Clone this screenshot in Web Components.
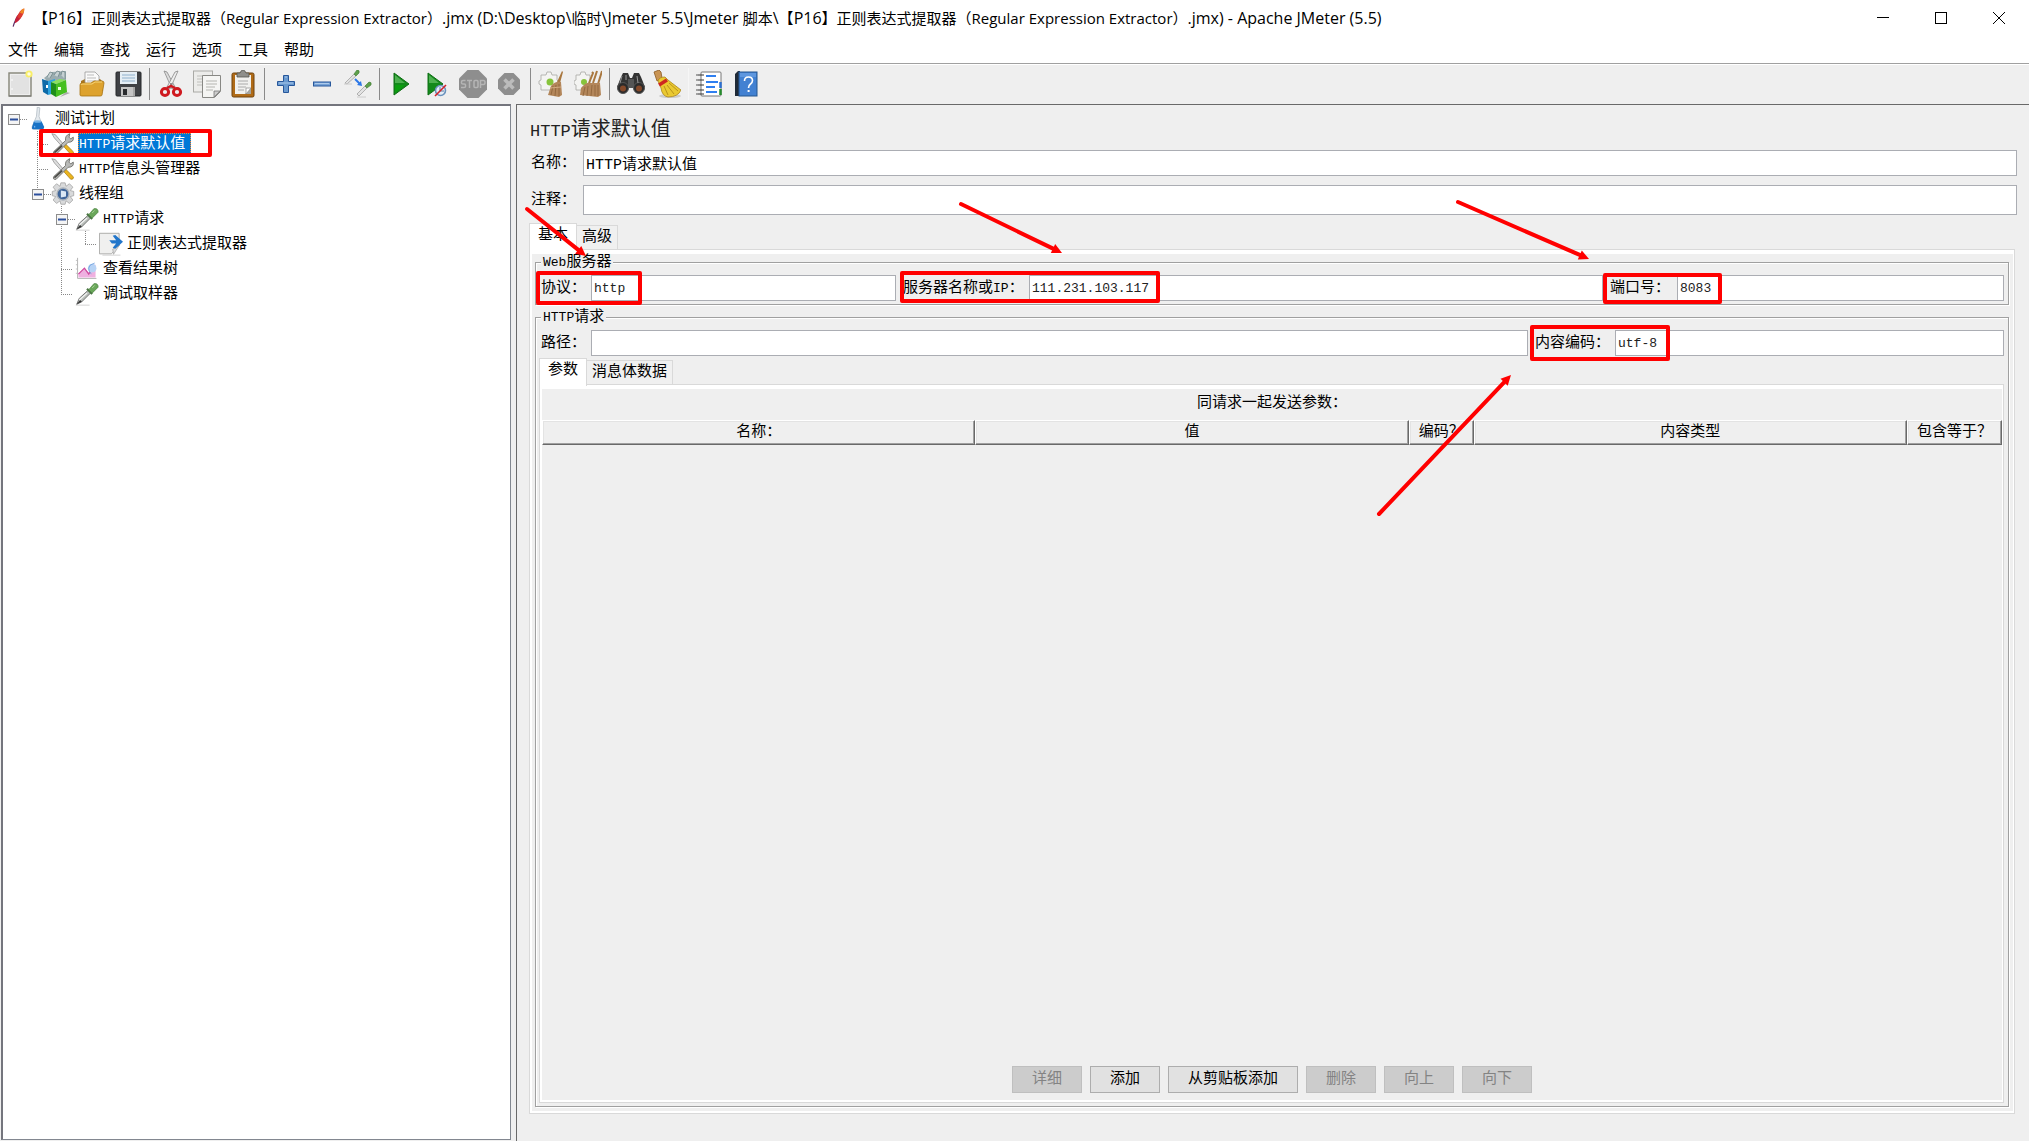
<!DOCTYPE html>
<html lang="zh-CN">
<head>
<meta charset="utf-8">
<title>Apache JMeter (5.5)</title>
<style>
  html, body { height: 100%; margin: 0; }
  body { background: #efefef; overflow: hidden; }
</style>
</head>
<body>
<jm-app></jm-app>
<script>
const ICONS = {
  feather: `<path d="M6 24C8 17 10 13 13 10" stroke="#5b2a63" stroke-width="1.4" fill="none"/><path d="M8 20C8 14 11 9 16 7C18 10 14 18 8 20Z" fill="#c5203a"/><path d="M11 13C12 8 15 4 19 3C19 7 18 11 14 15Z" fill="#dc3a30"/><path d="M14 8C15 5 17 3 19 3C19 5 19 7 17 9Z" fill="#f08a24"/>`,
  fresh: `<rect x="3" y="3" width="22" height="23" fill="#eee" stroke="#858578" stroke-width="1.4"/><rect x="5" y="5" width="18" height="19" fill="#e2e2e2"/><path d="M6 9v2M6 18v2" stroke="#fff"/><path d="M3 26h22" stroke="#777"/><circle cx="23" cy="4" r="3.6" fill="#f8ee68"/><circle cx="23" cy="4" r="1.7" fill="#fffde0"/>`,
  templates: `<path d="M2 8l8-6 14-1v12l-10 8z" fill="#9aacb0"/><path d="M5 7l3-5 3 1-3 5M12 5l3-4 3 1-2 5M19 5l1-4 3 1v7" fill="#c5d0d2" stroke="#6e8588" stroke-width=".8"/><path d="M0 9l6 2v14l-5-3z" fill="#0d6aa8"/><path d="M6 11l7-2v14l-7 2z" fill="#2ea3df"/><path d="M24 22l4 1-10 4z" fill="#aaa"/><path d="M9 12l5 2v13l-5-3z" fill="#1f8d1b"/><path d="M14 14l10-4 1 12-11 5z" fill="#46c020"/><path d="M14 14l10-4-6-1-9 3z" fill="#8be05e"/><rect x="4" y="15" width="2" height="3" fill="#fff"/><rect x="16" y="17" width="3" height="3" fill="#e9ffe0"/>`,
  open: `<path d="M3 11l4-2h15l3 3v9H3z" fill="#a8761e"/><path d="M7 2h10l4 4v9H7z" fill="#fafafa" stroke="#9a9a9a" stroke-width=".8"/><path d="M9 5h7M9 8h9M9 11h9" stroke="#bbb"/><path d="M2 15q0-2 2-2h9l3-2h8q2 0 2 2l-2 12q0 1-2 1H4q-2 0-2-1z" fill="#dda22e" stroke="#a87413" stroke-width=".8"/><path d="M3 15q0-1 2-1h9l3-2h7" stroke="#f8d578" fill="none"/>`,
  save: `<rect x="2" y="2" width="25" height="24" rx="1" fill="#3f4145"/><rect x="2" y="2" width="25" height="24" rx="1" fill="none" stroke="#26282b"/><rect x="6" y="2" width="17" height="12" fill="#e5eef5"/><path d="M8 5h13M8 8h13M8 11h13" stroke="#8fb0cc"/><rect x="7" y="17" width="14" height="9" fill="#c4c4c4"/><rect x="9" y="19" width="4" height="6" fill="#292b2e"/><path d="M20 17v9" stroke="#888"/>`,
  cut: `<path d="M7 1l3 1 8 15-3 2z" fill="#ddd" stroke="#888" stroke-width=".8"/><path d="M21 1l-3 1-8 15 3 2z" fill="#eee" stroke="#888" stroke-width=".8"/><circle cx="14" cy="14" r="1" fill="#777"/><ellipse cx="8" cy="22" rx="3.6" ry="3.6" fill="none" stroke="#cf1a20" stroke-width="3"/><ellipse cx="20" cy="22" rx="3.6" ry="3.6" fill="none" stroke="#cf1a20" stroke-width="3"/><path d="M10 18l4-2 4 2" stroke="#cf1a20" stroke-width="2.5" fill="none"/>`,
  copy: `<rect x="0.5" y="1" width="19" height="21" fill="#ececea" stroke="#aaaaa6"/><path d="M4 6h12M4 9h5M4 12h5M4 15h5" stroke="#c0c0bc"/><path d="M9.500 5.500h18v16l-6 6h-12z" fill="#f5f5f3" stroke="#888884"/><path d="M13 11h11M13 14h11M13 17h9M13 20h7" stroke="#b5b5b0"/><path d="M27 21l-6 6v-6z" fill="#ccc" stroke="#777" stroke-width=".8"/>`,
  paste: `<rect x="3" y="3" width="22" height="24" rx="1.500" fill="#b06b17" stroke="#6f430e"/><rect x="6" y="5" width="16" height="19" fill="#f1f1ef"/><path d="M9 11h10M9 14h10M9 17h8M9 20h6" stroke="#aaa"/><path d="M22 18l-6 6h6z" fill="#a5a5a0"/><path d="M22 18h-5v6z" fill="#fff" stroke="#888" stroke-width=".7"/><path d="M8 3h3q1-3 3-3t3 3h3v4H8z" fill="#8f8f8b" stroke="#55554f" stroke-width=".8"/>`,
  plus: `<path d="M11.500 5.500h5v6h6v4h-6v7h-5v-7h-6v-4h6z" fill="#6a9ad0" stroke="#27579b"/><path d="M13 7h2M7 13h14" stroke="#a9c8ea"/>`,
  minus: `<rect x="5.500" y="12" width="17" height="4" fill="#78a4d8" stroke="#27579b"/><path d="M7 13.500h14" stroke="#aecbec"/>`,
  toggle: `<path d="M1 13l9-9 2 2-9 8z" fill="#e3e3e3" stroke="#999" stroke-width=".7"/><path d="M10 4l3-4q3 0 2 3l-3 3z" fill="#5ea04c" stroke="#3d7a30" stroke-width=".6"/><path d="M13 24l8-8 2 2-8 8z" fill="#e3e3e3" stroke="#999" stroke-width=".7"/><path d="M21 16l4-4q3 0 2 3l-4 3z" fill="#5ea04c" stroke="#3d7a30" stroke-width=".6"/><path d="M11 9l5 5" stroke="#2d78e8" stroke-width="2"/><path d="M18 16l-5-1 4-4z" fill="#2d78e8"/><path d="M0 14h8M13 27h9" stroke="#ccc"/>`,
  start: `<path d="M7 3l15 11L7 25z" fill="#138a1b" stroke="#0f6e14"/><path d="M8 5l10 8H8z" fill="#4eb151"/><path d="M8 15h10l-10 8z" fill="#0aa00e"/>`,
  startno: `<path d="M5 3l15 11L5 25z" fill="#138a1b" stroke="#0f6e14"/><path d="M6 5l10 8H6z" fill="#4eb151"/><circle cx="17.500" cy="20.500" r="5" fill="#e4edf6" stroke="#6a92bd" stroke-width="1.600"/><path d="M17 17v4h4" stroke="#5b7da1" fill="none"/><path d="M12 26l11-11" stroke="#d3232a" stroke-width="1.600"/>`,
  stop: `<path d="M8.500 0h11L28 8.500v11L19.500 28h-11L0 19.500v-11z" fill="#8e8e8e"/><path d="M6.500 10.500H4q-1.500 0-1.500 1.500v1q0 1 1.500 1h1.500q1 0 1 1v1.500q0 1-1.500 1H2M8 10.500h5M10.500 10.500v7.500M15 11.500q0-1 1-1h2q1 0 1 1v5q0 1-1 1h-2q-1 0-1-1zM21.500 18v-7.500h3q1.500 0 1.500 2t-1.500 2h-3" stroke="#b5b5b5" fill="none" stroke-width="1.500"/>`,
  shutdown: `<path d="M9.500 3h9L25 9.500v9L18.500 25h-9L3 18.500v-9z" fill="#8e8e8e"/><path d="M9.500 9.500l9 9M18.500 9.500l-9 9" stroke="#bcbcbc" stroke-width="3.500"/>`,
  clear: `<path d="M3 5h5l1-3h4l1 3h5v5l2 2-2 3v5H3v-5l-2-1v-3l2-1z" fill="#f4f4f2" stroke="#a8a8a4" stroke-width=".8"/><circle cx="12" cy="12" r="3.500" fill="#87c43b"/><path d="M24 1l1 1-3 11-3-1z" fill="#a9773f"/><path d="M13 16q4-5 10-4l1 13-3 2-11-2z" fill="#b3865a"/><path d="M15 16l-2 9M18 15l-1 11M21 14v12" stroke="#94693f"/><path d="M12 18l11-1" stroke="#d1aa80"/>`,
  clearall: `<path d="M2 5h4l1-3h4l1 3h4v15H2v-5l-2-1v-3l2-1z" fill="#f4f4f2" stroke="#a8a8a4" stroke-width=".8"/><circle cx="10" cy="12" r="3" fill="#87c43b"/><path d="M18 2l1 1-4 10M23 1l-4 12M28 1l-4 13" stroke="#a9773f" stroke-width="2" fill="none"/><path d="M7 18q5-6 9-5h10l1 12-3 2-9-1-9-1z" fill="#b3865a"/><path d="M11 17l-2 9M14 16l-1 10M18 15l-1 11M21 15v11M24 15v11" stroke="#94693f"/>`,
  search: `<path d="M4 7l2-4h5l2 5 2 0 2-5h5l2 4 4 10H0z" fill="#343434"/><circle cx="6" cy="18" r="5.500" fill="#2b2b2b" stroke="#555"/><circle cx="22" cy="18" r="5.500" fill="#2b2b2b" stroke="#555"/><circle cx="6" cy="18.500" r="3" fill="#84492a"/><circle cx="22" cy="18.500" r="3" fill="#84492a"/><rect x="11" y="9" width="6" height="9" fill="#555"/><path d="M5 6l-2 7M20 6l1 7M9 5v5" stroke="#999"/>`,
  broom: `<ellipse cx="17" cy="26" rx="11" ry="2" fill="#ccc"/><path d="M1 2l5-2 2 2 1 6-5 3z" fill="#c99454" stroke="#8b5b22" stroke-width=".8"/><path d="M5 11q1-4 7-4l3 3 13 10q-3 7-13 7-6-1-7-9z" fill="#eac931" stroke="#ac871a" stroke-width=".8"/><path d="M6 15l8-5" stroke="#cf2620" stroke-width="3.500"/><path d="M11 16l4 9M14 15l7 9M16 13l9 8" stroke="#b9931b" fill="none"/>`,
  func: `<rect x="5" y="2" width="20" height="24" rx="1" fill="#fff" stroke="#777"/><path d="M24.500 12v6" stroke="#2c6fd0" stroke-width="2.500"/><path d="M24.500 19v6" stroke="#258b2c" stroke-width="2.500"/><path d="M10 6h10M10 12h12M10 17h9M10 22h11" stroke="#2f7ff0" stroke-width="1.800"/><path d="M2 5h6M2 10h6M2 15h6M2 20h6M2 24h6" stroke="#333"/><path d="M1 4v2M1 9v2M1 14v2M1 19v2M1 23v2" stroke="#888" stroke-width="1.500"/>`,
  help: `<path d="M3 4l3-3h2v25H3z" fill="#202b38"/><rect x="7" y="2" width="18" height="24" fill="#4281d2" stroke="#25568f"/><path d="M8 3h16v4H8z" fill="#5e97df"/><path d="M12.500 11q0-4 4-4t4 3.500q0 2-2 3.500t-2 4" stroke="#fff" stroke-width="1.600" fill="none"/><rect x="15.600" y="20" width="2" height="2" fill="#fff"/>`,
  flask: `<path d="M12 0l3 1-1 10 5 13q0 2-3 2H8q-3 0-2-3l5-12z" fill="#e5eaee" stroke="#a8b3bb" stroke-width=".8"/><path d="M8 17h9l3 6q0 3-3 3H8q-3 0-2-3z" fill="#1872c6"/><ellipse cx="12.500" cy="17" rx="4.500" ry="1.500" fill="#79b3e4"/><path d="M9 22v2" stroke="#9cd0ff"/>`,
  tools: `<path d="M1 2l4 1 10 12-2 2-9-10z" fill="#ddd" stroke="#777" stroke-width=".7"/><path d="M14 16l3-2 9 9q1 3-3 3z" fill="#ebb41d" stroke="#9b7413" stroke-width=".8"/><path d="M3 23l14-13q-1-6 5-8l-1 4 2 2 3-2q1 6-6 6L6 26q-4 1-3-3z" fill="#b9bab8" stroke="#6a6a66" stroke-width="1"/><path d="M4 24l9-8" stroke="#4c4c48" stroke-width="2"/>`,
  gear: `<path d="M11.500 1h5l1 4 4-3 4 4-3 4 4 1v5l-4 1 3 4-4 4-4-3-1 4h-5l-1-4-4 3-4-4 3-4-4-1v-5l4-1-3-4 4-4 4 3z" fill="#d9dadb" stroke="#999" stroke-width=".8"/><circle cx="14" cy="14" r="7" fill="#40669a" stroke="#aab2bb" stroke-width="1.500"/><path d="M11.500 10l6 1v6l-6 1z" fill="#dbe8f5"/>`,
  dropper: `<path d="M1 27h16" stroke="#ccc"/><path d="M2 26l3-7 11-10 3 3L8 23z" fill="#b9beba" stroke="#666" stroke-width="1"/><path d="M5 21l9-8" stroke="#f5f5f5" stroke-width="1.500"/><path d="M2 26l4-5 2 2z" fill="#333"/><path d="M14 8l6 6" stroke="#4b7544" stroke-width="2.500"/><path d="M16 9l6-7q5-1 5 4l-7 7z" fill="#6aa75a" stroke="#4b8340" stroke-width=".8"/><path d="M20 7l3-3" stroke="#b3dca4"/>`,
  extract: `<path d="M.5 1.500h23v14l-9 10h-14z" fill="#f0f0ef" stroke="#a2a29f"/><path d="M4 27h21" stroke="#ccc"/><path d="M24 15l-7 11-1-6z" fill="#ddd" stroke="#999" stroke-width=".7"/><path d="M12 9.500h8l-4-5 3-1 9 8-9 8-3-1 4-5h-5z" fill="#2276ca"/>`,
  chart: `<path d="M3 1v24h22" stroke="#aaa" fill="none"/><path d="M1 4h2M1 9h2M1 14h2M1 19h2" stroke="#bbb"/><path d="M4 24v-5l7-6 5 5 4-9 4 0v15z" fill="#efb0e0"/><path d="M4 20l7-7 5 7 3-5" fill="none" stroke="#cf4a9e" stroke-width="1.500"/><circle cx="20" cy="13" r="5" fill="#b7d3f5"/><path d="M23 7q-7 2-7 6t3 7" stroke="#73a3de" fill="none"/>`
};

const SONG = `font-family:"Liberation Mono","Noto Sans CJK SC",monospace;`;

function define(name, html) {
  customElements.define(name, class extends HTMLElement {
    connectedCallback() {
      if (this.shadowRoot) return;
      const root = this.attachShadow({ mode: 'open' });
      root.innerHTML = typeof html === 'function' ? html(this) : html;
    }
  });
}

define('jm-icon', el => `<style>:host{display:block;width:28px;height:28px;flex:none}
:host([small]) {width:24px;height:24px} svg{display:block;width:100%;height:100%}</style>
<svg viewBox="0 0 28 28" aria-hidden="true">${ICONS[el.getAttribute('name')]}</svg>`);

define('jm-titlebar', `<style>
:host{display:flex;align-items:center;height:36px;background:#fff;padding:0 24px 0 8px;font:15px/20px "Open Sans","Noto Sans CJK SC",sans-serif;color:#000}
h1{flex:1;margin:0 0 0 1px;font:inherit;white-space:nowrap}
.l{font-size:16px}
nav{display:flex;gap:46px}
button{width:12px;height:12px;padding:0;border:0;background:none}
svg{display:block}
</style>
<jm-icon small name="feather"></jm-icon>
<h1>【<span class="l">P16</span>】正则表达式提取器（Regular Expression Extractor）<span class="l">.jmx (D:\\Desktop\\</span>临时<span class="l">\\Jmeter 5.5\\Jmeter </span>脚本<span class="l">\\</span>【<span class="l">P16</span>】正则表达式提取器（Regular Expression Extractor）<span class="l">.jmx) - Apache JMeter (5.5)</span></h1>
<nav>
<button aria-label="最小化"><svg width="12" height="12"><path d="M0 5.500h12" stroke="#000"/></svg></button>
<button aria-label="最大化"><svg width="12" height="12"><rect x=".5" y=".5" width="11" height="11" fill="none" stroke="#000"/></svg></button>
<button aria-label="关闭"><svg width="12" height="12"><path d="M0 0l12 12M12 0L0 12" stroke="#000"/></svg></button>
</nav>`);

define('jm-menubar', `<style>
:host{display:flex;align-items:flex-start;gap:16px;height:27px;padding:0 8px;background:#fff;border-bottom:1px solid #a0a0a0}
button{border:0;padding:0;background:none;font:15px/25px "Noto Sans CJK SC",sans-serif;color:#000}
</style>` + ['文件','编辑','查找','运行','选项','工具','帮助'].map(t => `<button>${t}</button>`).join(''));

const TOOLS = [['fresh','新建'],['templates','模板'],['open','打开'],['save','保存'],'|',['cut','剪切'],['copy','复制'],['paste','粘贴'],'|',
  ['plus','展开'],['minus','折叠'],['toggle','切换'],'|',['start','启动'],['startno','不停顿启动'],['stop','停止'],['shutdown','关闭'],'|',
  ['clear','清除'],['clearall','清除全部'],'|',['search','查找'],['broom','重置查找'],'',['func','函数助手'],['help','帮助']];
define('jm-toolbar', `<style>
:host{display:flex;align-items:center;height:38px;padding:0 2px 1px;border-top:1px solid #fff;background:#efefef}
button{width:36px;height:36px;padding:4px;border:0;background:none}
i{width:1px;height:32px;margin:0 3px;background:#8a8a8a}
i.soft{background:#f6f6f6}
</style>` + TOOLS.map(t => t === '|' ? '<i></i>' : t === '' ? '<i class="soft"></i>' :
  `<button aria-label="${t[1]}"><jm-icon name="${t[0]}"></jm-icon></button>`).join(''));

define('jm-node', el => {
  const d = +el.getAttribute('depth');
  const handle = el.hasAttribute('open')
    ? '<svg class="h" viewBox="0 0 24 25"><path d="M13 13.500h11" stroke="#888" stroke-dasharray="1 1"/><rect x="5.500" y="8.500" width="11" height="10" fill="#f4f4f4" stroke="#8d8d8d"/><path d="M7 13.500h8" stroke="#2c4f9c" stroke-width="2"/></svg>'
    : '<svg class="h" viewBox="0 0 24 25"><path d="M10 13.500h12" stroke="#888" stroke-dasharray="1 1"/></svg>';
  return `<style>
:host{display:flex;align-items:center;height:25px;padding-left:${d * 24}px;${SONG}font-size:15px;line-height:20px;white-space:nowrap;color:#000}
.h{width:24px;height:25px;flex:none}
span{margin-left:3px;padding:2px 1px 0;height:20px}
:host([selected]) span{height:19px;background:#0078d7;color:#fff;padding-right:6px;outline:1px dotted #ff8728;outline-offset:-1px}
::slotted(i){font-size:13px;font-style:normal}
</style>${handle}<jm-icon small name="${el.getAttribute('icon')}"></jm-icon><span><slot></slot></span>`;
});

define('jm-tree', `<style>
:host{display:block;position:relative;background:#fff;border:2px solid #74757d;border-right:1px solid #828790;border-bottom:1px solid #828790;box-sizing:border-box}
.lines{position:absolute;left:0;top:0}
.rows{position:relative}
</style>
<svg class="lines" width="130" height="210" fill="none" stroke="#888" stroke-dasharray="1 1"><path d="M34.500 25v58M58.500 100v88M82.500 125v13"/></svg>
<div class="rows">
<jm-node depth="0" open icon="flask">测试计划</jm-node>
<jm-node depth="1" selected icon="tools"><i>HTTP</i>请求默认值</jm-node>
<jm-node depth="1" icon="tools"><i>HTTP</i>信息头管理器</jm-node>
<jm-node depth="1" open icon="gear">线程组</jm-node>
<jm-node depth="2" open icon="dropper"><i>HTTP</i>请求</jm-node>
<jm-node depth="3" icon="extract">正则表达式提取器</jm-node>
<jm-node depth="2" icon="chart">查看结果树</jm-node>
<jm-node depth="2" icon="dropper">调试取样器</jm-node>
</div>`);

define('jm-field', el => `<style>
:host{display:flex;align-items:center;min-width:0;${SONG}font-size:15px;color:#000}
label{flex:none;width:var(--label,50px);padding-top:2px;line-height:20px;white-space:nowrap}
input{flex:1;min-width:0;box-sizing:border-box;height:var(--h,26px);border:1px solid #abadb3;border-radius:0;background:#fff;padding:0 2px;margin:0;font:inherit;color:#000;outline:0}
input.latin{font-size:13px;color:#222}
.l{font-size:13px}
</style><label for="f">${el.getAttribute('label').replace('IP', '<span class="l">IP</span>')}</label><input id="f" type="text" class="${el.hasAttribute('latin') ? 'latin' : ''}" value="${el.getAttribute('value') || ''}">`);

define('jm-group', el => `<style>
:host{display:flex;flex-direction:column;min-height:0}
fieldset{flex:1;min-width:0;min-height:0;display:flex;flex-direction:column;gap:2px;margin:0;padding:5px 4px 3px 3px;border:1px solid #a0a0a0;box-shadow:1px 1px 0 #fff,inset 1px 1px 0 #fff}
legend{height:14px;margin-left:2px;padding:2px 2px 0;background:#efefef;${SONG}font-size:15px;line-height:14px;color:#000}
.l{font-size:13px}
</style><fieldset><legend>${el.getAttribute('label').replace(/^[A-Za-z]+/, m => `<span class="l">${m}</span>`)}</legend><slot></slot></fieldset>`);

define('jm-tabs', el => `<style>
:host{display:flex;flex-direction:column;min-height:0}
.list{display:flex;align-items:flex-end;height:26px}
button{box-sizing:border-box;height:24px;padding:0 5px;border:1px solid #d9d9d9;border-left:0;border-bottom:0;background:#f0f0f0;${SONG}font-size:15px;line-height:22px;color:#000}
button[aria-selected=true]{position:relative;height:28px;margin-bottom:-2px;padding:0 8px 4px;border-left:1px solid #d9d9d9;background:#fff}
.pane{flex:1;min-height:0;display:flex;flex-direction:column;border:1px solid #d9d9d9}
.in{flex:1;min-height:0;display:flex;flex-direction:column;gap:4px;padding:var(--pad,0);background:#efefef;border:solid #fff;border-width:4px 1px 2px 2px}
</style><div class="list" role="tablist">${el.getAttribute('tabs').split(',').map((t, i) => `<button role="tab" aria-selected="${i === 0}">${t}</button>`).join('')}</div>
<div class="pane" role="tabpanel"><div class="in"><slot></slot></div></div>`);

define('jm-params', `<style>
:host{flex:1;display:flex;flex-direction:column;${SONG}font-size:15px;color:#000}
p{margin:0;height:31px;line-height:30px;text-align:center}
table{width:100%;table-layout:fixed;border-collapse:separate;border-spacing:0}
th{box-sizing:border-box;height:25px;padding:0;font-weight:400;line-height:20px;white-space:nowrap;border:1px solid;border-color:#fff #696969 #696969 #fff;box-shadow:inset -1px -1px 0 #a0a0a0,inset 1px 1px 0 #e3e3e3}
.enc{width:65px}.inc{width:95px}
footer{display:flex;justify-content:center;gap:8px;margin-top:auto;padding-bottom:7px}
button{box-sizing:border-box;height:27px;min-width:70px;padding:0 19px;border:1px solid #adadad;background:#e1e1e1;font:inherit;line-height:20px;color:#000}
button:disabled{background:#ccc;border-color:#bfbfbf;color:#838383}
</style>
<p>同请求一起发送参数：</p>
<table><thead><tr><th>名称：</th><th>值</th><th class="enc">编码？</th><th>内容类型</th><th class="inc">包含等于？</th></tr></thead></table>
<footer><button disabled>详细</button><button>添加</button><button>从剪贴板添加</button><button disabled>删除</button><button disabled>向上</button><button disabled>向下</button></footer>`);

define('jm-editor', `<style>
:host{display:flex;flex-direction:column;box-sizing:border-box;padding:14px 12px 27px;border:solid #696969;border-width:1px 0 0 1px;background:#efefef;${SONG}color:#000}
h2{height:24px;margin:0 0 7px 1px;font-size:20px;line-height:24px;font-weight:400;color:#222}
h2 span{font-size:17px}
.meta{--label:52px;margin-left:2px}
.note{--h:30px;margin:9px 0 8px 2px}
.main{flex:1;margin-right:2px;--pad:0 4px 4px 3px}
.params{flex:1;--pad:0}
.row{display:flex;gap:7px;padding-left:2px}
.a{flex:355 1 0}.b{--label:126px;flex:700 1 0}.c{--label:67px;flex:394 1 0}
.d{flex:987 1 0}.e{--label:80px;flex:469 1 0}
.grow{flex:1}
</style>
<h2><span>HTTP</span>请求默认值</h2>
<jm-field class="meta" label="名称：" value="HTTP请求默认值"></jm-field>
<jm-field class="meta note" label="注释："></jm-field>
<jm-tabs class="main" tabs="基本,高级">
  <jm-group label="Web服务器"><div class="row">
    <jm-field class="a" latin label="协议：" value="http"></jm-field>
    <jm-field class="b" latin label="服务器名称或IP：" value="111.231.103.117"></jm-field>
    <jm-field class="c" latin label="端口号：" value="8083"></jm-field>
  </div></jm-group>
  <jm-group class="grow" label="HTTP请求">
    <div class="row">
      <jm-field class="d" label="路径："></jm-field>
      <jm-field class="e" latin label="内容编码：" value="utf-8"></jm-field>
    </div>
    <jm-tabs class="params" tabs="参数,消息体数据"><jm-params></jm-params></jm-tabs>
  </jm-group>
</jm-tabs>`);

const arrow = (x1, y1, x2, y2) => {
  const a = Math.atan2(y2 - y1, x2 - x1), c = Math.cos(a), s = Math.sin(a);
  const p = (u, v) => `${(x2 - u * c - v * s).toFixed(1)},${(y2 - u * s + v * c).toFixed(1)}`;
  return `<path d="M${x1} ${y1}L${p(7, 0)}" stroke-width="4" stroke-linecap="round"/><polygon points="${p(0, 0)} ${p(10, 5)} ${p(10, -5)}" fill="#f00" stroke="none"/>`;
};
define('jm-marks', `<style>:host{position:absolute;left:0;top:0;width:100%;height:100%;pointer-events:none;overflow:hidden}svg{display:block;width:2029px;height:1141px}</style>
<svg viewBox="0 0 2029 1141" fill="none" stroke="#f00" stroke-width="4" stroke-linejoin="round" aria-hidden="true">
<rect x="41" y="131" width="169" height="24"/><rect x="538" y="273" width="102" height="30"/><rect x="902" y="273" width="256" height="28"/><rect x="1605" y="275" width="115" height="27"/><rect x="1532" y="327" width="136" height="32"/>
${arrow(527, 209, 586, 256)}${arrow(961, 204, 1062, 253)}${arrow(1458, 202, 1589, 259)}${arrow(1379, 514, 1511, 375)}
</svg>`);

define('jm-app', `<style>
:host{position:relative;display:flex;flex-direction:column;height:100vh;background:#efefef}
jm-titlebar,jm-menubar,jm-toolbar{flex:none}
main{flex:1;min-height:0;display:flex;gap:5px}
jm-tree{flex:0 0 510px;margin:0 0 1px 1px}
jm-editor{flex:1;min-width:0}
</style>
<jm-titlebar></jm-titlebar><jm-menubar></jm-menubar><jm-toolbar></jm-toolbar>
<main><jm-tree></jm-tree><jm-editor></jm-editor></main>
<jm-marks></jm-marks>`);
</script>
</body>
</html>
